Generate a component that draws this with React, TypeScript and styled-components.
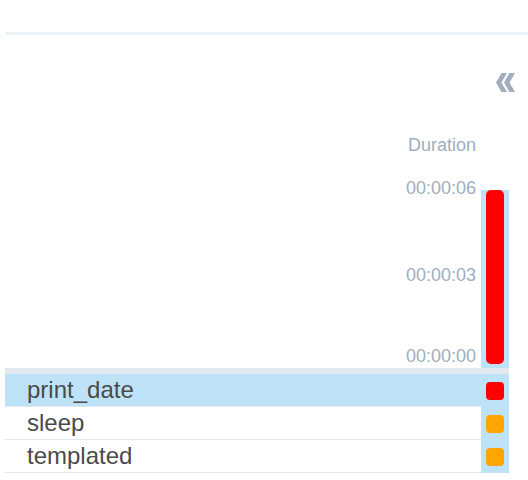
import React from "react";
import styled, { createGlobalStyle } from "styled-components";

const GlobalStyle = createGlobalStyle`
  html, body {
    margin: 0;
    padding: 0;
    background: #ffffff;
    font-family: "Liberation Sans", Arial, sans-serif;
  }
`;

const Page = styled.div`
  width: 528px;
  height: 480px;
  box-sizing: border-box;
  padding: 32px 0 0 5px;
  overflow: hidden;
`;

const Rule = styled.div`
  height: 3px;
  background: #edf2f7;
`;

const Toolbar = styled.div`
  display: flex;
  justify-content: flex-end;
  padding: 38px 13px 0 0;
`;

const CollapseButton = styled.button`
  display: flex;
  border: 0;
  padding: 0;
  background: none;
  color: #a0aec0;
  cursor: pointer;
`;

const Panel = styled.div`
  width: 504px;
  margin-top: 44px;
`;

const Cols = styled.div`
  display: grid;
  grid-template-columns: 1fr 28px;
`;

const HeaderLabel = styled.div`
  font-size: 18px;
  line-height: 18px;
  color: #a0aec0;
  text-align: right;
  padding-right: 5px;
`;

const Chart = styled(Cols)`
  height: 178px;
  margin-top: 36px;
`;

const Axis = styled.div`
  display: flex;
  flex-direction: column;
  justify-content: space-between;
  margin: -11px 0 3px;
  padding-right: 5px;
`;

const Tick = styled.div<{ $nudge?: number }>`
  font-size: 18px;
  line-height: 18px;
  color: #a0aec0;
  text-align: right;
  transform: translateY(${(p) => p.$nudge ?? 0}px);
`;

const BarTrack = styled.div`
  background: #bee3f8;
  padding: 0 5px 4px;
  display: flex;
  flex-direction: column;
  justify-content: flex-end;
`;

const Bar = styled.div`
  background: #ff0000;
  border-radius: 5px;
`;

const Separator = styled.div`
  height: 6px;
  background: #e2e8f0;
`;

const Row = styled(Cols)<{ $selected?: boolean }>`
  background: ${(p) => (p.$selected ? "#bee3f8" : "transparent")};
`;

const Name = styled.div`
  font-size: 24px;
  line-height: 32px;
  color: #4a4a4a;
  padding-left: 22px;
  border-bottom: 1px solid #e2e8f0;
`;

const SwatchCell = styled.div`
  background: #bee3f8;
  display: flex;
  align-items: center;
  justify-content: center;
`;

const Swatch = styled.div<{ $color: string }>`
  width: 18px;
  height: 18px;
  border-radius: 4px;
  background: ${(p) => p.$color};
`;

const tasks = [
  { name: "print_date", color: "#ff0000", selected: true },
  { name: "sleep", color: "#ffa500" },
  { name: "templated", color: "#ffa500" },
];

const ChevronsLeft = () => (
  <svg width="19" height="19" viewBox="0 0 19 19" fill="currentColor">
    <polygon points="0,9.5 5.5,0 11,0 5.5,9.5 11,19 5.5,19" />
    <polygon points="8,9.5 13.5,0 19,0 13.5,9.5 19,19 13.5,19" />
  </svg>
);

export default function App() {
  const maxSeconds = 6;
  const value = 6;
  return (
    <Page>
      <GlobalStyle />
      <Rule />
      <Toolbar>
        <CollapseButton aria-label="Collapse">
          <ChevronsLeft />
        </CollapseButton>
      </Toolbar>
      <Panel>
        <Cols>
          <HeaderLabel>Duration</HeaderLabel>
          <div />
        </Cols>
        <Chart>
          <Axis>
            <Tick>00:00:06</Tick>
            <Tick $nudge={3}>00:00:03</Tick>
            <Tick>00:00:00</Tick>
          </Axis>
          <BarTrack>
            <Bar style={{ height: `${(value / maxSeconds) * 100}%` }} />
          </BarTrack>
        </Chart>
        <Separator />
        {tasks.map((t) => (
          <Row key={t.name} $selected={t.selected}>
            <Name>{t.name}</Name>
            <SwatchCell>
              <Swatch $color={t.color} />
            </SwatchCell>
          </Row>
        ))}
      </Panel>
    </Page>
  );
}
